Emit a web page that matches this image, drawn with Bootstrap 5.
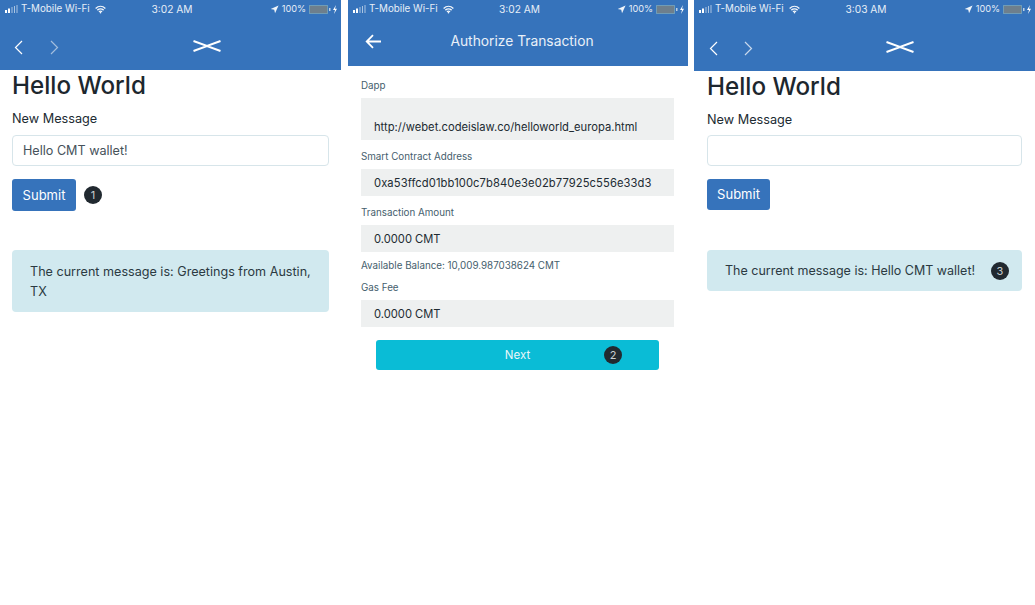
<!doctype html>
<html lang="en">
<head>
<meta charset="utf-8">
<title>CMT wallet</title>
<link href="https://cdn.jsdelivr.net/npm/bootstrap@5.3.0/dist/css/bootstrap.min.css" rel="stylesheet">
<style>
html,body{background:#fff;height:605px;overflow:hidden}
body{font-family:Inter,"Liberation Sans",sans-serif;color:#212b32}
.shots{width:1035px}
.phone{width:341px;flex:none}
.phone-mid{width:340px;margin:0 6px 0 7px}
.appbar{background:#3673bb;color:#fff;height:70px}
.appbar-mid{height:66px}
.appbar-last{height:71px}
.statusrow{height:17px;padding:1px 2px 0 5px;font-size:9.8px;line-height:16px;color:#e6eef7}
.status-side{flex:1 1 0;min-width:0}
.clock{font-size:10.2px}
.pct{font-size:9.2px}
.sig{width:13px;height:8px;margin-right:3px}
.wifi-mark{margin-left:5px}
.loc-mark{margin-right:3px}
.batt-mark{margin-left:3px}
.navrow{height:53px;padding:7px 0 0 14px}
.navrow-last{height:54px;padding:8px 0 0 15px}
.nav-fwd{margin-left:27px}
.navrow-last .nav-fwd{margin-left:26px}
.knot-mark{position:absolute;left:207px;top:23px;transform:translateX(-50%)}
.navrow-last .knot-mark{left:206px;top:24px}
.wide{padding:0 12px}
.wide-last{padding:0 13px}
.big-title{font-size:24.2px;font-weight:500;line-height:32px;margin:0;color:#1d272e}
.msg-label{font-size:12.7px;line-height:16px;margin:9px 0 8px;color:#212b32}
.wide-last .msg-label{margin:9px 0 7px}
.msg-input{height:31px;border:1.5px solid #d7e5ea;border-radius:4px;font-size:12.6px;padding:0 10px;color:#46525a;width:100%;display:block;outline:none;background:#fff}
.send-row{margin-top:13px}
.send-btn{background:#3673bb;border:0;color:#fff;border-radius:3px;width:64px;height:32px;padding:1px 0 0;font-size:13px}
.wide-last .send-btn{height:31px;width:63px}
.numdot{width:18px;height:18px;border-radius:50%;background:#212930;color:#c9ced1;font-size:11px;line-height:18px;text-align:center;flex:none}
.notice{background:#d1e9ef;border-radius:4px;font-size:12.6px;line-height:20px;color:#2b3a42;padding:12px 18px 10px;margin-top:39px}
.wide-last .notice{margin-top:40px}
.notice-one{height:62px}
.notice-two{height:41px;padding:0 13px 0 18px}
.notice-two > span:first-child{padding-top:1px;font-size:12.5px}
.midbar{height:48px;padding:0 0 0 17px}
.title-mid{font-size:13.8px;color:#e9f0f8;left:174px;top:14px;transform:translateX(-50%)}
.form-mid{padding:0 14px 0 13px}
.fine{font-size:9.8px;line-height:12px;color:#45606d;margin:0}
.f-first{margin:14px 0 6px}
.f-next{margin:11px 0 6px}
.f-bal{margin:8px 0 10px}
.f-gas{margin:0 0 6px}
.valbox{background:#eef0f0;font-size:11.2px;color:#212b32;padding:0 13px;height:27px;line-height:29px}
.valbox-tall{height:42px;line-height:14px;padding-top:22px}
.valbox-addr{letter-spacing:.1px}
.next-btn{background:#0abcd6;border:0;color:#e9f7fa;border-radius:3px;height:30px;width:283px;padding:2px 0 0;font-size:11.5px;margin:13px 0 0 15px}
.next-btn .numdot{position:absolute;right:37px;top:6px}
</style>
</head>
<body class="m-0">
<svg width="0" height="0" class="position-absolute">
  <defs>
    <symbol id="wifi" viewBox="0 0 14 10"><path d="M.8 3.600C4.500.2 9.500.2 13.200 3.600M3 5.800c2.400-2 5.600-2 8 0M5 7.800c1.200-.9 2.800-.9 4 0" fill="none" stroke="#f4f7fb" stroke-width="1.700"/><circle cx="7" cy="9" r="1" fill="#f4f7fb"/></symbol>
    <symbol id="signal" viewBox="0 0 13 8"><rect x="0" y="5" width="2" height="3" fill="#fff"/><rect x="3" y="3.500" width="2" height="4.500" fill="#fff"/><rect x="6.500" y="2" width="1" height="6" fill="#a9c4e2"/><rect x="9" y="1" width="1" height="7" fill="#a9c4e2"/><rect x="11.500" y="0" width="1" height="8" fill="#a9c4e2"/></symbol>
    <symbol id="loc" viewBox="0 0 10 10"><path d="M9.500.5.800 4.400l3.900.9.900 4z" fill="#f0f5fa"/></symbol>
    <symbol id="batt" viewBox="0 0 30 9"><rect x=".5" y=".5" width="18" height="8" fill="#6e7f8c" stroke="#8fc0c8" stroke-dasharray="1 1"/><rect x="20" y="3" width="1.500" height="3" fill="#bcd0e4"/><path d="M27 0 24 5h2l-1 4 3-5.200h-2z" fill="#fff"/></symbol>
    <symbol id="knot" viewBox="0 0 28 12"><path d="M.5 1 14 6 27.500 1M.5 11 14 6l13.500 5" fill="none" stroke="#fff" stroke-width="1.900"/></symbol>
    <symbol id="back" viewBox="0 0 9 15"><path d="M8 1 1.500 7.500 8 14" fill="none" stroke="#fff" stroke-width="1.200"/></symbol>
    <symbol id="fwd" viewBox="0 0 9 15"><path d="M1 1l6.500 6.500L1 14" fill="none" stroke="currentColor" stroke-width="1.200"/></symbol>
  </defs>
</svg>
<div class="d-flex shots">

  <section class="phone">
    <header class="appbar">
      <div class="statusrow d-flex align-items-center">
        <div class="status-side d-flex align-items-center"><svg class="sig"><use href="#signal"/></svg><span class="text-nowrap">T-Mobile Wi-Fi</span><svg class="wifi-mark" width="11" height="9"><use href="#wifi"/></svg></div>
        <span class="clock">3:02 AM</span>
        <div class="status-side d-flex align-items-center justify-content-end"><svg width="9" height="9" class="loc-mark"><use href="#loc"/></svg><span class="pct">100%</span><svg class="batt-mark" width="30" height="9"><use href="#batt"/></svg></div>
      </div>
      <div class="navrow d-flex align-items-center position-relative">
        <svg width="9" height="15"><use href="#back"/></svg>
        <svg class="nav-fwd" width="9" height="15" color="#a3bedd"><use href="#fwd"/></svg>
        <svg class="knot-mark" width="28" height="12"><use href="#knot"/></svg>
      </div>
    </header>
    <div class="wide">
      <h1 class="big-title">Hello World</h1>
      <p class="msg-label">New Message</p>
      <input class="msg-input" value="Hello CMT wallet!" aria-label="New Message">
      <div class="d-flex align-items-center send-row">
        <button class="send-btn" type="button">Submit</button>
        <span class="numdot ms-2">1</span>
      </div>
      <div class="notice notice-one">The current message is: Greetings from Austin, TX</div>
    </div>
  </section>

  <section class="phone phone-mid">
    <header class="appbar appbar-mid">
      <div class="statusrow d-flex align-items-center">
        <div class="status-side d-flex align-items-center"><svg class="sig"><use href="#signal"/></svg><span class="text-nowrap">T-Mobile Wi-Fi</span><svg class="wifi-mark" width="11" height="9"><use href="#wifi"/></svg></div>
        <span class="clock">3:02 AM</span>
        <div class="status-side d-flex align-items-center justify-content-end"><svg width="9" height="9" class="loc-mark"><use href="#loc"/></svg><span class="pct">100%</span><svg class="batt-mark" width="30" height="9"><use href="#batt"/></svg></div>
      </div>
      <div class="midbar d-flex align-items-center position-relative">
        <svg width="16" height="15" viewBox="0 0 16 15"><path d="M16 7.500H2M8 1.200 1.700 7.500 8 13.800" fill="none" stroke="#fff" stroke-width="1.800"/></svg>
        <span class="title-mid position-absolute text-nowrap">Authorize Transaction</span>
      </div>
    </header>
    <div class="form-mid">
      <p class="fine f-first">Dapp</p>
      <div class="valbox valbox-tall">http://webet.codeislaw.co/helloworld_europa.html</div>
      <p class="fine f-next">Smart Contract Address</p>
      <div class="valbox valbox-addr">0xa53ffcd01bb100c7b840e3e02b77925c556e33d3</div>
      <p class="fine f-next">Transaction Amount</p>
      <div class="valbox">0.0000 CMT</div>
      <p class="fine f-bal">Available Balance: 10,009.987038624 CMT</p>
      <p class="fine f-gas">Gas Fee</p>
      <div class="valbox">0.0000 CMT</div>
      <button class="next-btn position-relative" type="button">Next<span class="numdot">2</span></button>
    </div>
  </section>

  <section class="phone">
    <header class="appbar appbar-last">
      <div class="statusrow d-flex align-items-center">
        <div class="status-side d-flex align-items-center"><svg class="sig"><use href="#signal"/></svg><span class="text-nowrap">T-Mobile Wi-Fi</span><svg class="wifi-mark" width="11" height="9"><use href="#wifi"/></svg></div>
        <span class="clock">3:03 AM</span>
        <div class="status-side d-flex align-items-center justify-content-end"><svg width="9" height="9" class="loc-mark"><use href="#loc"/></svg><span class="pct">100%</span><svg class="batt-mark" width="30" height="9"><use href="#batt"/></svg></div>
      </div>
      <div class="navrow-last d-flex align-items-center position-relative">
        <svg width="9" height="15"><use href="#back"/></svg>
        <svg class="nav-fwd" width="9" height="15" color="#c9d9ec"><use href="#fwd"/></svg>
        <svg class="knot-mark" width="28" height="12"><use href="#knot"/></svg>
      </div>
    </header>
    <div class="wide-last">
      <h1 class="big-title">Hello World</h1>
      <p class="msg-label">New Message</p>
      <input class="msg-input" aria-label="New Message">
      <div class="d-flex align-items-center send-row">
        <button class="send-btn" type="button">Submit</button>
      </div>
      <div class="notice notice-two d-flex align-items-center justify-content-between"><span>The current message is: Hello CMT wallet!</span><span class="numdot">3</span></div>
    </div>
  </section>
</div>
<script src="https://cdn.jsdelivr.net/npm/bootstrap@5.3.0/dist/js/bootstrap.bundle.min.js"></script>
</body>
</html>
